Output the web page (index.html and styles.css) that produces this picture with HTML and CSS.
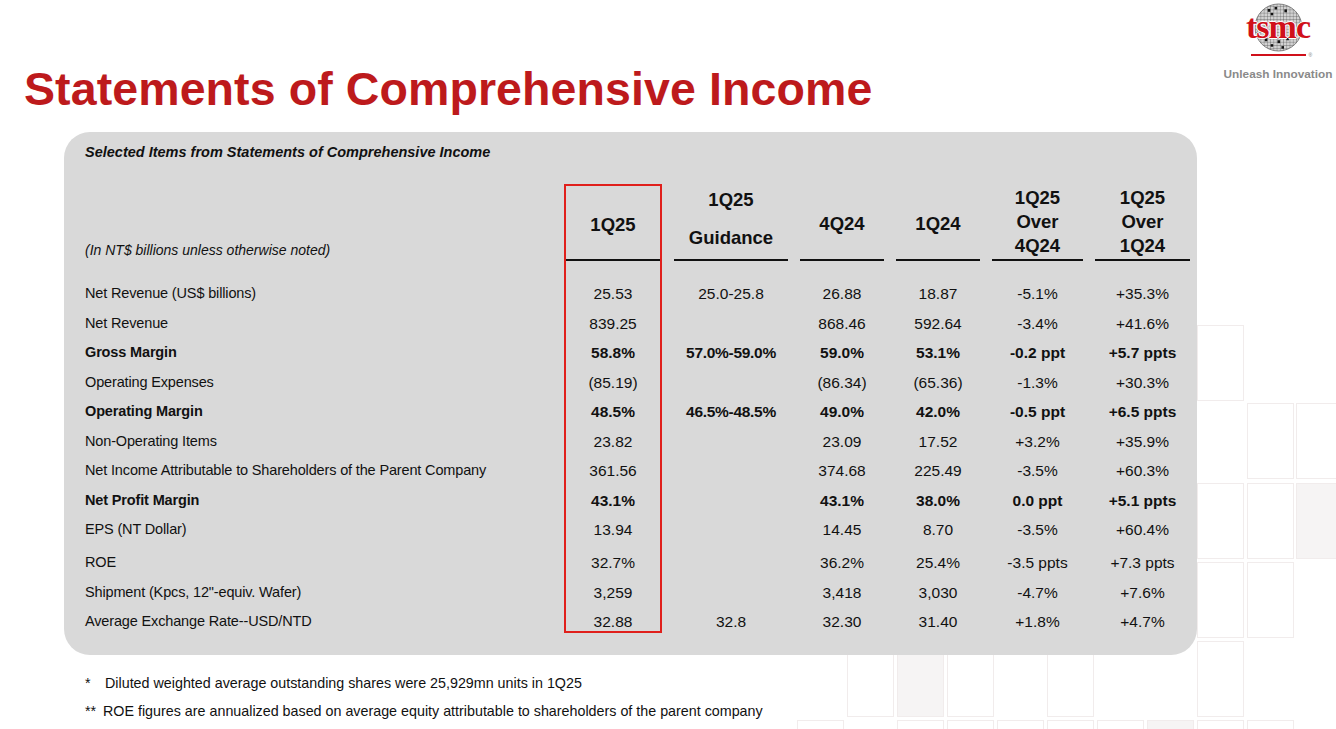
FILE: index.html
```html
<!DOCTYPE html>
<html lang="en">
<head>
<meta charset="utf-8">
<title>Statements of Comprehensive Income</title>
<link rel="stylesheet" href="styles.css">
</head>
<body>
<div class="bg-grid" aria-hidden="true">
  <span class="sq" style="left:1197px;top:325px"></span>
  <span class="sq" style="left:1247px;top:403px"></span>
  <span class="sq" style="left:1296px;top:403px"></span>
  <span class="sq" style="left:1197px;top:483px"></span>
  <span class="sq" style="left:1247px;top:483px"></span>
  <span class="sq fill" style="left:1296px;top:483px"></span>
  <span class="sq" style="left:1197px;top:562px"></span>
  <span class="sq" style="left:1247px;top:562px"></span>
  <span class="sq" style="left:1197px;top:641px"></span>
  <span class="sq" style="left:847px;top:641px"></span>
  <span class="sq fill" style="left:897px;top:641px"></span>
  <span class="sq" style="left:947px;top:641px"></span>
  <span class="sq" style="left:1047px;top:641px"></span>
  <span class="sq" style="left:797px;top:720px"></span>
  <span class="sq" style="left:897px;top:720px"></span>
  <span class="sq" style="left:947px;top:720px"></span>
  <span class="sq" style="left:997px;top:720px"></span>
  <span class="sq" style="left:1047px;top:720px"></span>
  <span class="sq" style="left:1097px;top:720px"></span>
  <span class="sq fill" style="left:1147px;top:720px"></span>
  <span class="sq" style="left:1197px;top:720px"></span>
  <span class="sq" style="left:1247px;top:720px"></span>
</div>

<header class="top">
  <h1 class="title">Statements of Comprehensive Income</h1>
  <div class="brand">
    <div class="wafer">
      <svg class="wafer-svg" viewBox="0 0 50 50" width="49" height="49">
        <defs>
          <clipPath id="wc"><circle cx="25" cy="25" r="24"/></clipPath>
          <pattern id="grid" width="3.3" height="3.3" patternUnits="userSpaceOnUse">
            <rect width="3.3" height="3.3" fill="#d2d2d2"/>
            <path d="M0 0H3.3M0 0V3.3" stroke="#444" stroke-width="0.6"/>
          </pattern>
        </defs>
        <circle cx="25" cy="25" r="24" fill="url(#grid)"/>
        <g clip-path="url(#wc)" fill="#111">
          <rect x="14" y="6" width="2.6" height="3"/>
          <rect x="21" y="4" width="2.6" height="2.6"/>
          <rect x="31" y="6.5" width="2.6" height="3"/>
          <rect x="17" y="10" width="2.6" height="2.6"/>
          <rect x="11" y="36" width="2.6" height="3"/>
          <rect x="24" y="38" width="2.6" height="3"/>
          <rect x="33" y="35" width="2.6" height="3"/>
          <rect x="17" y="42" width="2.6" height="2.6"/>
          <rect x="28" y="44" width="2.6" height="2.6"/>
        </g>
        <circle cx="25" cy="25" r="24" fill="none" stroke="#666" stroke-width="0.8"/>
      </svg>
      <span class="wordmark">tsmc</span>
    </div>
    <div class="brand-line"><span class="reg">®</span></div>
    <div class="tagline">Unleash Innovation</div>
  </div>
</header>

<section class="panel">
  <div class="panel-title">Selected Items from Statements of Comprehensive Income</div>
  <div class="table">
    <div class="col col-label">
      <div class="head head-label"><span class="note">(In NT$ billions unless otherwise noted)</span></div>
      <div class="body">
        <div class="cell">Net Revenue (US$ billions)</div>
        <div class="cell">Net Revenue</div>
        <div class="cell b">Gross Margin</div>
        <div class="cell">Operating Expenses</div>
        <div class="cell b">Operating Margin</div>
        <div class="cell">Non-Operating Items</div>
        <div class="cell">Net Income Attributable to Shareholders of the Parent Company</div>
        <div class="cell b">Net Profit Margin</div>
        <div class="cell">EPS (NT Dollar)</div>
        <div class="cell roe">ROE</div>
        <div class="cell">Shipment (Kpcs, 12"-equiv. Wafer)</div>
        <div class="cell last">Average Exchange Rate--USD/NTD</div>
      </div>
    </div>

    <div class="col col-num col-hl">
      <div class="head head-center"><span>1Q25</span></div>
      <div class="body">
        <div class="cell">25.53</div>
        <div class="cell">839.25</div>
        <div class="cell b">58.8%</div>
        <div class="cell">(85.19)</div>
        <div class="cell b">48.5%</div>
        <div class="cell">23.82</div>
        <div class="cell">361.56</div>
        <div class="cell b">43.1%</div>
        <div class="cell">13.94</div>
        <div class="cell roe">32.7%</div>
        <div class="cell">3,259</div>
        <div class="cell last">32.88</div>
      </div>
    </div>

    <div class="col col-num col-guid">
      <div class="head head-guid"><span>1Q25</span><span>Guidance</span></div>
      <div class="body">
        <div class="cell">25.0-25.8</div>
        <div class="cell"></div>
        <div class="cell b">57.0%-59.0%</div>
        <div class="cell"></div>
        <div class="cell b">46.5%-48.5%</div>
        <div class="cell"></div>
        <div class="cell"></div>
        <div class="cell"></div>
        <div class="cell"></div>
        <div class="cell roe"></div>
        <div class="cell"></div>
        <div class="cell last">32.8</div>
      </div>
    </div>

    <div class="col col-num col-q4">
      <div class="head head-center"><span>4Q24</span></div>
      <div class="body">
        <div class="cell">26.88</div>
        <div class="cell">868.46</div>
        <div class="cell b">59.0%</div>
        <div class="cell">(86.34)</div>
        <div class="cell b">49.0%</div>
        <div class="cell">23.09</div>
        <div class="cell">374.68</div>
        <div class="cell b">43.1%</div>
        <div class="cell">14.45</div>
        <div class="cell roe">36.2%</div>
        <div class="cell">3,418</div>
        <div class="cell last">32.30</div>
      </div>
    </div>

    <div class="col col-num col-q1">
      <div class="head head-center"><span>1Q24</span></div>
      <div class="body">
        <div class="cell">18.87</div>
        <div class="cell">592.64</div>
        <div class="cell b">53.1%</div>
        <div class="cell">(65.36)</div>
        <div class="cell b">42.0%</div>
        <div class="cell">17.52</div>
        <div class="cell">225.49</div>
        <div class="cell b">38.0%</div>
        <div class="cell">8.70</div>
        <div class="cell roe">25.4%</div>
        <div class="cell">3,030</div>
        <div class="cell last">31.40</div>
      </div>
    </div>

    <div class="col col-num col-o4">
      <div class="head head-stack"><span>1Q25</span><span>Over</span><span>4Q24</span></div>
      <div class="body">
        <div class="cell">-5.1%</div>
        <div class="cell">-3.4%</div>
        <div class="cell b">-0.2 ppt</div>
        <div class="cell">-1.3%</div>
        <div class="cell b">-0.5 ppt</div>
        <div class="cell">+3.2%</div>
        <div class="cell">-3.5%</div>
        <div class="cell b">0.0 ppt</div>
        <div class="cell">-3.5%</div>
        <div class="cell roe">-3.5 ppts</div>
        <div class="cell">-4.7%</div>
        <div class="cell last">+1.8%</div>
      </div>
    </div>

    <div class="col col-num col-o1">
      <div class="head head-stack"><span>1Q25</span><span>Over</span><span>1Q24</span></div>
      <div class="body">
        <div class="cell">+35.3%</div>
        <div class="cell">+41.6%</div>
        <div class="cell b">+5.7 ppts</div>
        <div class="cell">+30.3%</div>
        <div class="cell b">+6.5 ppts</div>
        <div class="cell">+35.9%</div>
        <div class="cell">+60.3%</div>
        <div class="cell b">+5.1 ppts</div>
        <div class="cell">+60.4%</div>
        <div class="cell roe">+7.3 ppts</div>
        <div class="cell">+7.6%</div>
        <div class="cell last">+4.7%</div>
      </div>
    </div>
  </div>
</section>

<footer class="notes">
  <p class="fn"><span class="mark mark1">*</span><span>Diluted weighted average outstanding shares were 25,929mn units in 1Q25</span></p>
  <p class="fn"><span class="mark mark2">**</span><span>ROE figures are annualized based on average equity attributable to shareholders of the parent company</span></p>
</footer>
</body>
</html>
```

FILE: styles.css
```css
* { box-sizing: border-box; }

html, body {
  margin: 0;
  padding: 0;
}

body {
  width: 1336px;
  height: 729px;
  overflow: hidden;
  position: relative;
  background: #ffffff;
  color: #111111;
  font-family: "Liberation Sans", Arial, sans-serif;
}

/* decorative faint background squares */
.bg-grid {
  position: absolute;
  inset: 0;
  z-index: 0;
  overflow: hidden;
  pointer-events: none;
}
.sq {
  position: absolute;
  width: 47px;
  height: 76px;
  border: 1px solid #f1ecec;
}
.sq.fill { background: #f6f4f4; }

/* header */
.top {
  position: relative;
  z-index: 1;
  display: flex;
  justify-content: space-between;
  align-items: flex-start;
  height: 111px;
}
.title {
  margin: 66px 0 0 24px;
  font-size: 46.5px;
  line-height: 47px;
  font-weight: 700;
  color: #bd1a1c;
  letter-spacing: 0.1px;
}

.brand {
  width: 116px;
  display: flex;
  flex-direction: column;
  align-items: center;
  padding-top: 3px;
}
.wafer {
  position: relative;
  width: 68px;
  height: 49px;
  display: flex;
  justify-content: center;
}
.wafer-svg { display: block; }
.wordmark {
  position: absolute;
  left: -4px;
  right: -4px;
  top: 9px;
  text-align: center;
  font-family: "Liberation Serif", "Times New Roman", serif;
  font-weight: 700;
  font-size: 34px;
  line-height: 30px;
  letter-spacing: -1px;
  color: #d0101a;
  text-shadow: 1px 0 0 #fff, -1px 0 0 #fff, 0 1px 0 #fff, 0 -1px 0 #fff;
}
.brand-line {
  position: relative;
  margin-top: 2px;
  width: 55px;
  height: 2px;
  background: #d0101a;
}
.reg {
  position: absolute;
  left: 58px;
  top: -1px;
  font-size: 5px;
  line-height: 5px;
  color: #777;
}
.tagline {
  margin-top: 11px;
  font-size: 11.8px;
  line-height: 14px;
  font-weight: 700;
  color: #8a8a8a;
  white-space: nowrap;
}

/* panel */
.panel {
  position: relative;
  z-index: 1;
  margin: 21px 0 0 64px;
  width: 1133px;
  height: 523px;
  background: #d9d9d9;
  border-radius: 26px;
  padding: 10px 0 0 21px;
}
.panel-title {
  font-size: 14.5px;
  line-height: 20px;
  font-weight: 700;
  font-style: italic;
  color: #111;
}

.table {
  margin-top: 22px;
  display: flex;
  gap: 12px;
  align-items: flex-start;
}
.col { flex: none; }
.col-label { width: 467px; }
.col-hl { width: 98px; }
.col-guid { width: 114px; }
.col-q4 { width: 84px; }
.col-q1 { width: 84px; }
.col-o4 { width: 91px; }
.col-o1 { width: 95px; }

.head {
  height: 77px;
  border-bottom: 2px solid #111;
  display: flex;
  flex-direction: column;
  align-items: center;
  font-size: 18.5px;
  font-weight: 700;
  color: #111;
}
.head-label {
  border-bottom-color: transparent;
  align-items: flex-start;
  justify-content: flex-end;
}
.note {
  font-size: 14px;
  line-height: 18px;
  font-style: italic;
  font-weight: 400;
}
.head-center {
  justify-content: center;
  padding-top: 5px;
  line-height: 24px;
}
.head-guid {
  justify-content: flex-start;
  padding-top: 4px;
  line-height: 24px;
  row-gap: 14px;
}
.head-stack {
  justify-content: flex-end;
  padding-bottom: 1px;
  line-height: 24px;
}

.col-hl {
  border: 2px solid #e0201c;
}
.col-hl .head {
  height: 75px;
}

.body {
  padding-top: 18px;
}
.cell {
  height: 29.5px;
  line-height: 29.5px;
  white-space: nowrap;
}
.cell.roe {
  height: 33px;
  padding-top: 3.5px;
}
.cell.last {
  height: 24px;
}
.cell.b { font-weight: 700; }

.col-label .cell {
  font-size: 14.5px;
  letter-spacing: -0.15px;
}
.col-num .cell {
  text-align: center;
  font-size: 15.5px;
}
.col-guid .cell.b { letter-spacing: -0.3px; }

/* footnotes */
.notes {
  position: relative;
  z-index: 1;
  margin: 19px 0 0 85px;
  font-size: 14.3px;
  color: #111;
}
.fn {
  margin: 0;
  height: 28px;
  line-height: 18px;
  display: flex;
}
.mark { display: inline-block; }
.mark1 { width: 20px; }
.mark2 { width: 18px; }
```
